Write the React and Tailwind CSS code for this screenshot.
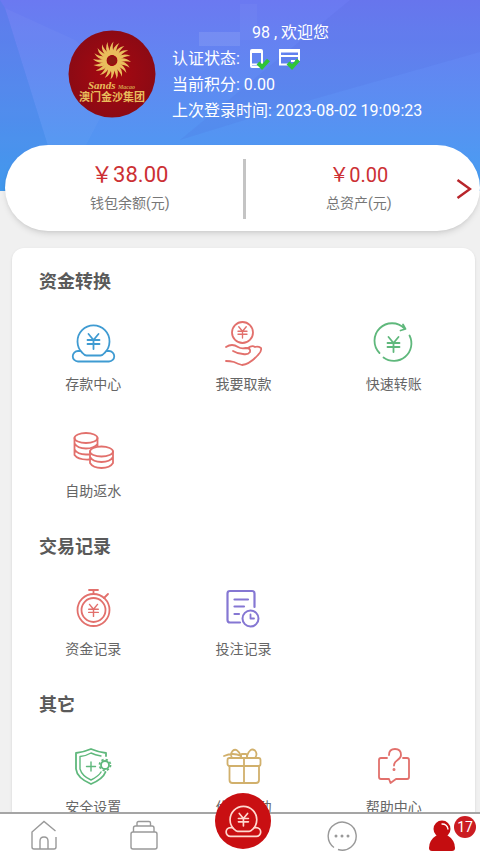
function Yen({ x = 24, y = 24, s = 1 }) {
  return (
    <g transform={`translate(${x} ${y}) scale(${s})`}>
      <path d="M-5 -7 L0 -1 L5 -7 M0 -1 V8 M-6 -1 H6 M-6 3 H6" />
    </g>
  );
}

function Icon({ className, children }) {
  return (
    <svg
      viewBox="0 0 48 48"
      className={`size-12 ${className}`}
      fill="none"
      stroke="currentColor"
      strokeWidth="1.8"
      strokeLinecap="round"
      strokeLinejoin="round"
      aria-hidden="true"
    >
      {children}
    </svg>
  );
}

function DepositShape() {
  return (
    <>
      <path d="M13.500 34 a16 16 0 1 1 22 0 q-2 2.500 -4 2.500 H17.500 q-2 0 -4 -2.500Z" />
      <path d="M11.500 32 H9 a5.200 5.200 0 0 0 0 10.500 H40 a5.200 5.200 0 0 0 0 -10.500 H37.500" />
      <Yen x={24.5} y={22} />
    </>
  );
}

function DepositIcon() {
  return (
    <Icon className="text-[#3f9bd2]">
      <DepositShape />
    </Icon>
  );
}

function WithdrawIcon() {
  return (
    <Icon className="text-[#e2706c]">
      <circle cx="23.500" cy="13.500" r="10.500" />
      <Yen x={23.5} y={13} s={0.75} />
      <path d="M7 28 q6 -4 12 0 q3 2 8 1 q5 0 4 4 q-2 3 -7 2 q-5 0 -10 -3" />
      <path d="M29 29 q4 -3 7 -1 q3 -1 6 1 q1 3 -3 7 q-8 9 -16 10 q-4 -1 -8 -3 q-4 -1 -8 -1" />
    </Icon>
  );
}

function TransferIcon() {
  return (
    <Icon className="text-[#5fb87c]">
      <path d="M9.500 34 a17.500 17.500 0 0 1 25 -24.500 M33 5.500 L35.500 10 L30.500 11.500" />
      <path d="M39.500 16.500 a17.500 17.500 0 0 1 -26 22" />
      <Yen x={23.5} y={25} />
    </Icon>
  );
}

function CoinsIcon() {
  return (
    <Icon className="text-[#e2706c]">
      <ellipse cx="17" cy="12" rx="11.500" ry="5" />
      <path d="M5.500 12 V29 Q9 34 20 33.500 M28.500 12 V20 M5.500 17.500 q3 5 11.500 5 q8 0 11.500 -4.500 M5.500 23.500 q3 5 11.500 5 h3" />
      <ellipse cx="32.500" cy="25.500" rx="11.500" ry="5" />
      <path d="M21 25.500 V37 q3 5 11.500 5 t11.500 -5 V25.500 M21 31 q3 5 11.500 5 t11.500 -5" />
    </Icon>
  );
}

function FundsIcon() {
  return (
    <Icon className="text-[#e2706c]">
      <circle cx="24.500" cy="26" r="16" />
      <circle cx="24.500" cy="26" r="12" />
      <path d="M20 6 H29 M24.500 6 V10 M35 14 L39 10" />
      <Yen x={24.5} y={26} s={0.8} />
    </Icon>
  );
}

function BetsIcon() {
  return (
    <Icon className="text-[#8577d3]">
      <path strokeWidth="2.200" d="M21 38.500 H11 q-2.500 0 -2.500 -2.500 V9.500 Q8.500 7 11 7 H33 q2.500 0 2.500 2.500 V23" />
      <path strokeWidth="2.200" d="M15.500 15.500 H29 M15.500 22.500 H25 M15.500 30 H20" />
      <circle cx="31.500" cy="34.500" r="8" strokeWidth="2" />
      <path d="M31.500 30.500 V34.500 H35" />
    </Icon>
  );
}

function ShieldIcon() {
  return (
    <Icon className="text-[#5fb87c]">
      <path d="M37 14 V11 Q29 10 22 7 Q15 10 7 11 V27 Q8 36 22 42 Q34 37 36.500 30" />
      <path d="M32 14 Q26 13 22 11 Q17 14 11 14.500 V27 Q13 34 22 38 Q30 34 32 30" strokeWidth="1.400" />
      <path d="M22 20 V29 M17.500 24.500 H26.500" strokeWidth="1.400" />
      <circle cx="36" cy="23" r="4" />
      <circle cx="36" cy="23" r="5.500" strokeDasharray="2.200 2.120" strokeLinecap="butt" />
    </Icon>
  );
}

function GiftIcon() {
  return (
    <Icon className="text-[#d1b06c]">
      <rect x="8.500" y="16" width="33" height="8" rx="2" />
      <path d="M10.500 24 V38 q0 3 3 3 H37 q3 0 3 -3 V24 M25 16 V41" />
      <path d="M22 14 Q18 5 13.500 9 Q11 12 13 16 M22 14 Q14 10 5 14 M28 14 Q31 5 36 8.500 Q39 12 36 16" />
      <rect x="22" y="12" width="6" height="4" rx="1" />
    </Icon>
  );
}

function HelpIcon() {
  return (
    <Icon className="text-[#e2706c]">
      <path d="M17 16 H11 q-2 0 -2 2 V35 q0 2 2 2 H19 L20.500 41 L26 37 H37 q2 0 2 -2 V18 q0 -2 -2 -2 H33" />
      <path d="M19 13 q0 -6 6 -6 t6 6 q0 3 -4 5.500 q-3 2 -3 5" />
      <circle cx="24" cy="27.500" r="0.600" fill="currentColor" />
    </Icon>
  );
}

const sections = [
  {
    title: "资金转换",
    items: [
      { label: "存款中心", icon: DepositIcon },
      { label: "我要取款", icon: WithdrawIcon },
      { label: "快速转账", icon: TransferIcon },
      { label: "自助返水", icon: CoinsIcon },
    ],
  },
  {
    title: "交易记录",
    items: [
      { label: "资金记录", icon: FundsIcon },
      { label: "投注记录", icon: BetsIcon },
    ],
  },
  {
    title: "其它",
    items: [
      { label: "安全设置", icon: ShieldIcon },
      { label: "优惠活动", icon: GiftIcon },
      { label: "帮助中心", icon: HelpIcon },
    ],
  },
];

const rays = Array.from({ length: 20 }, (_, i) => i * 18);

function Avatar() {
  return (
    <svg viewBox="0 0 88 88" className="mt-2.5 size-22 shrink-0" role="img" aria-label="澳门金沙集团">
      <defs>
        <radialGradient id="avatarRed">
          <stop offset="0" stopColor="#a80810" />
          <stop offset="1" stopColor="#8c0a14" />
        </radialGradient>
      </defs>
      <circle cx="44" cy="44" r="43.500" fill="url(#avatarRed)" />
      {rays.map((angle) => (
        <path
          key={angle}
          d="M42.500 25 Q40 17 45.500 11.500 Q43.500 18 46.500 25Z"
          fill="#e9bd5c"
          transform={`rotate(${angle} 44 30.500)`}
        />
      ))}
      <circle cx="44" cy="30.500" r="4" fill="#8c1a10" />
      <text x="20" y="59" fontSize="11" fontStyle="italic" fontWeight="700" fill="#e9bd5c" fontFamily="Liberation Serif, serif">
        Sands
      </text>
      <text x="50" y="59" fontSize="6" fontStyle="italic" fontWeight="700" fill="#d3a04c" fontFamily="Liberation Serif, serif">
        Macao
      </text>
      <text x="44" y="71" textAnchor="middle" fontSize="11" fontWeight="700" fill="#e9bd5c" fontFamily="Noto Sans CJK SC, sans-serif">
        澳门金沙集团
      </text>
    </svg>
  );
}

function Check() {
  return <path d="M10 15 l4 4 l6.500 -7" stroke="#2fc437" strokeWidth="4" />;
}

function Header() {
  return (
    <header className="relative h-[191px] overflow-hidden bg-linear-to-b from-[#6b79f1] to-[#459ff2] text-white">
      <svg viewBox="0 0 480 191" preserveAspectRatio="none" className="absolute inset-0 size-full" aria-hidden="true">
        <path d="M0 0 L5 8 L62 191 H0Z" fill="#2b7fd8" opacity="0.180" />
        <path d="M5 8 L75 40 L120 80 L62 191Z" fill="#fff" opacity="0.030" />
        <path d="M480 52 L300 103 L180 140 L350 0 H480Z" fill="#4a58d0" opacity="0.110" />
        <rect x="199" y="32" width="41" height="14" fill="#fff" opacity="0.100" />
        <rect x="240" y="4" width="17" height="36" fill="#fff" opacity="0.030" />
      </svg>
      <div className="relative flex gap-4 pt-5 pl-17 text-base leading-[26px]">
        <Avatar />
        <div>
          <p className="pl-20">98 , 欢迎您</p>
          <p className="flex items-center gap-2">
            认证状态:
            <svg viewBox="0 0 22 22" className="size-[22px]" fill="none" stroke="#fff" strokeWidth="2" aria-label="手机已认证">
              <rect x="3" y="2" width="11" height="17" rx="1" />
              <path d="M3 4 H14 M3 16.500 H14" />
              <Check />
            </svg>
            <svg viewBox="0 0 22 22" className="size-[22px]" fill="none" stroke="#fff" strokeWidth="2" aria-label="银行卡已认证">
              <path d="M10 16.500 H2 V2 H21 V13 M2 3.500 H21 M2 8 H21 M13 13 h4" />
              <Check />
            </svg>
          </p>
          <p>当前积分: 0.00</p>
          <p>上次登录时间: 2023-08-02 19:09:23</p>
        </div>
      </div>
    </header>
  );
}

function Balance() {
  return (
    <section className="relative -mt-[46px] ml-[5px] flex h-[86px] items-center rounded-full bg-white pt-0.5 shadow-md">
      <div className="w-1/2 pl-3 text-center">
        <p className="text-[22px] leading-7 text-[#cc3034]">￥38.00</p>
        <p className="text-sm leading-7 text-[#777]">钱包余额(元)</p>
      </div>
      <div className="h-[60px] w-[3px] bg-[#c4c4c4]" />
      <div className="flex-1 pl-5 text-center">
        <p className="text-xl leading-7 text-[#cc3034]">￥0.00</p>
        <p className="text-sm leading-7 text-[#777]">总资产(元)</p>
      </div>
      <button type="button" aria-label="查看资产" className="pr-2 pl-1 text-[#b8252b]">
        <svg viewBox="0 0 16 22" className="h-[22px] w-4" fill="none" stroke="currentColor" strokeWidth="2.500">
          <path d="M1.500 2 L14 11 L1.500 20" />
        </svg>
      </button>
    </section>
  );
}

function Section({ title, items }) {
  return (
    <section>
      <h2 className="pl-[21px] text-lg leading-6 font-bold text-[#5a5a5a]">{title}</h2>
      <div className="mt-[25px] grid grid-cols-3 gap-y-8">
        {items.map(({ label, icon: ItemIcon }) => (
          <a key={label} href="#" className="flex flex-col items-center gap-[7px]">
            <ItemIcon />
            <span className="text-sm leading-5 text-[#666]">{label}</span>
          </a>
        ))}
      </div>
    </section>
  );
}

function NavBar() {
  return (
    <nav className="relative grid h-[39px] shrink-0 grid-cols-[94px_1fr_1fr_1fr_88px] border-t-2 border-[#a5a5a5] bg-white text-[#999]">
      <a href="#" aria-label="首页" className="flex justify-center pt-1.5 pr-1.5">
        <svg viewBox="0 0 30 32" className="h-8 w-[30px]" fill="none" stroke="currentColor" strokeWidth="1.400">
          <path d="M26.500 11 L15 1.500 L3 12 V27 q0 2 2 2 H25 q2 0 2 -2 V17" />
          <path d="M11 29 V21 q0 -4 4 -4 t4 4 V29" />
        </svg>
      </a>
      <a href="#" aria-label="钱包" className="flex justify-center pt-1.5">
        <svg viewBox="0 0 30 32" className="h-8 w-[30px]" fill="none" stroke="currentColor" strokeWidth="1.400">
          <rect x="2" y="12" width="26" height="17" rx="2" />
          <path d="M4.500 12 V8 q0 -2 2 -2 H23 q2 0 2 2 V12 M8 6 V3 q0 -1.500 1.500 -1.500 H20 q1.500 0 1.500 1.500 V6" />
        </svg>
      </a>
      <a
        href="#"
        aria-label="存款"
        className="-mt-[21px] flex size-14 items-center justify-center justify-self-center rounded-full bg-[#c90f12] text-[#ffd9d0]"
      >
        <svg viewBox="0 0 48 48" className="size-10" fill="none" stroke="currentColor" strokeWidth="2" strokeLinecap="round">
          <DepositShape />
        </svg>
      </a>
      <a href="#" aria-label="消息" className="flex justify-center pt-1.5">
        <svg viewBox="0 0 32 32" className="size-8" fill="none" stroke="currentColor" strokeWidth="1.400">
          <path d="M8 27.500 A14 14 0 1 1 12 29.500" />
          <g fill="currentColor" stroke="none">
            <circle cx="10" cy="16" r="1.500" />
            <circle cx="16" cy="16" r="1.500" />
            <circle cx="22" cy="16" r="1.500" />
          </g>
        </svg>
      </a>
      <a href="#" aria-label="我的" className="relative pt-1.5 pl-[35px]">
        <svg viewBox="0 0 30 32" className="h-8 w-[30px]" fill="#c40d10">
          <circle cx="15" cy="9" r="8.500" />
          <path d="M10 15 H20 Q28 20 28 28 Q28 31 25 31 H5 Q2 31 2 28 Q2 20 10 15Z" />
          <path d="M15 4 q5 0 6 5" fill="none" stroke="#fff" strokeWidth="1.300" strokeLinecap="round" />
        </svg>
        <span className="absolute top-0.5 right-1 flex size-[22px] items-center justify-center rounded-full bg-[#cb1c22] text-sm text-white">
          17
        </span>
      </a>
    </nav>
  );
}

export default function App() {
  return (
    <div className="flex h-screen flex-col bg-[#f0f0f0] font-['Roboto','Noto_Sans_CJK_SC',sans-serif]">
      <main className="flex-1 overflow-y-auto [scrollbar-width:none]">
        <Header />
        <Balance />
        <div className="mt-[17px] mr-[5px] ml-3 flex flex-col gap-[34px] rounded-xl bg-white px-1.5 pt-[22px] pb-8 shadow-sm">
          {sections.map((section) => (
            <Section key={section.title} {...section} />
          ))}
        </div>
      </main>
      <NavBar />
    </div>
  );
}
